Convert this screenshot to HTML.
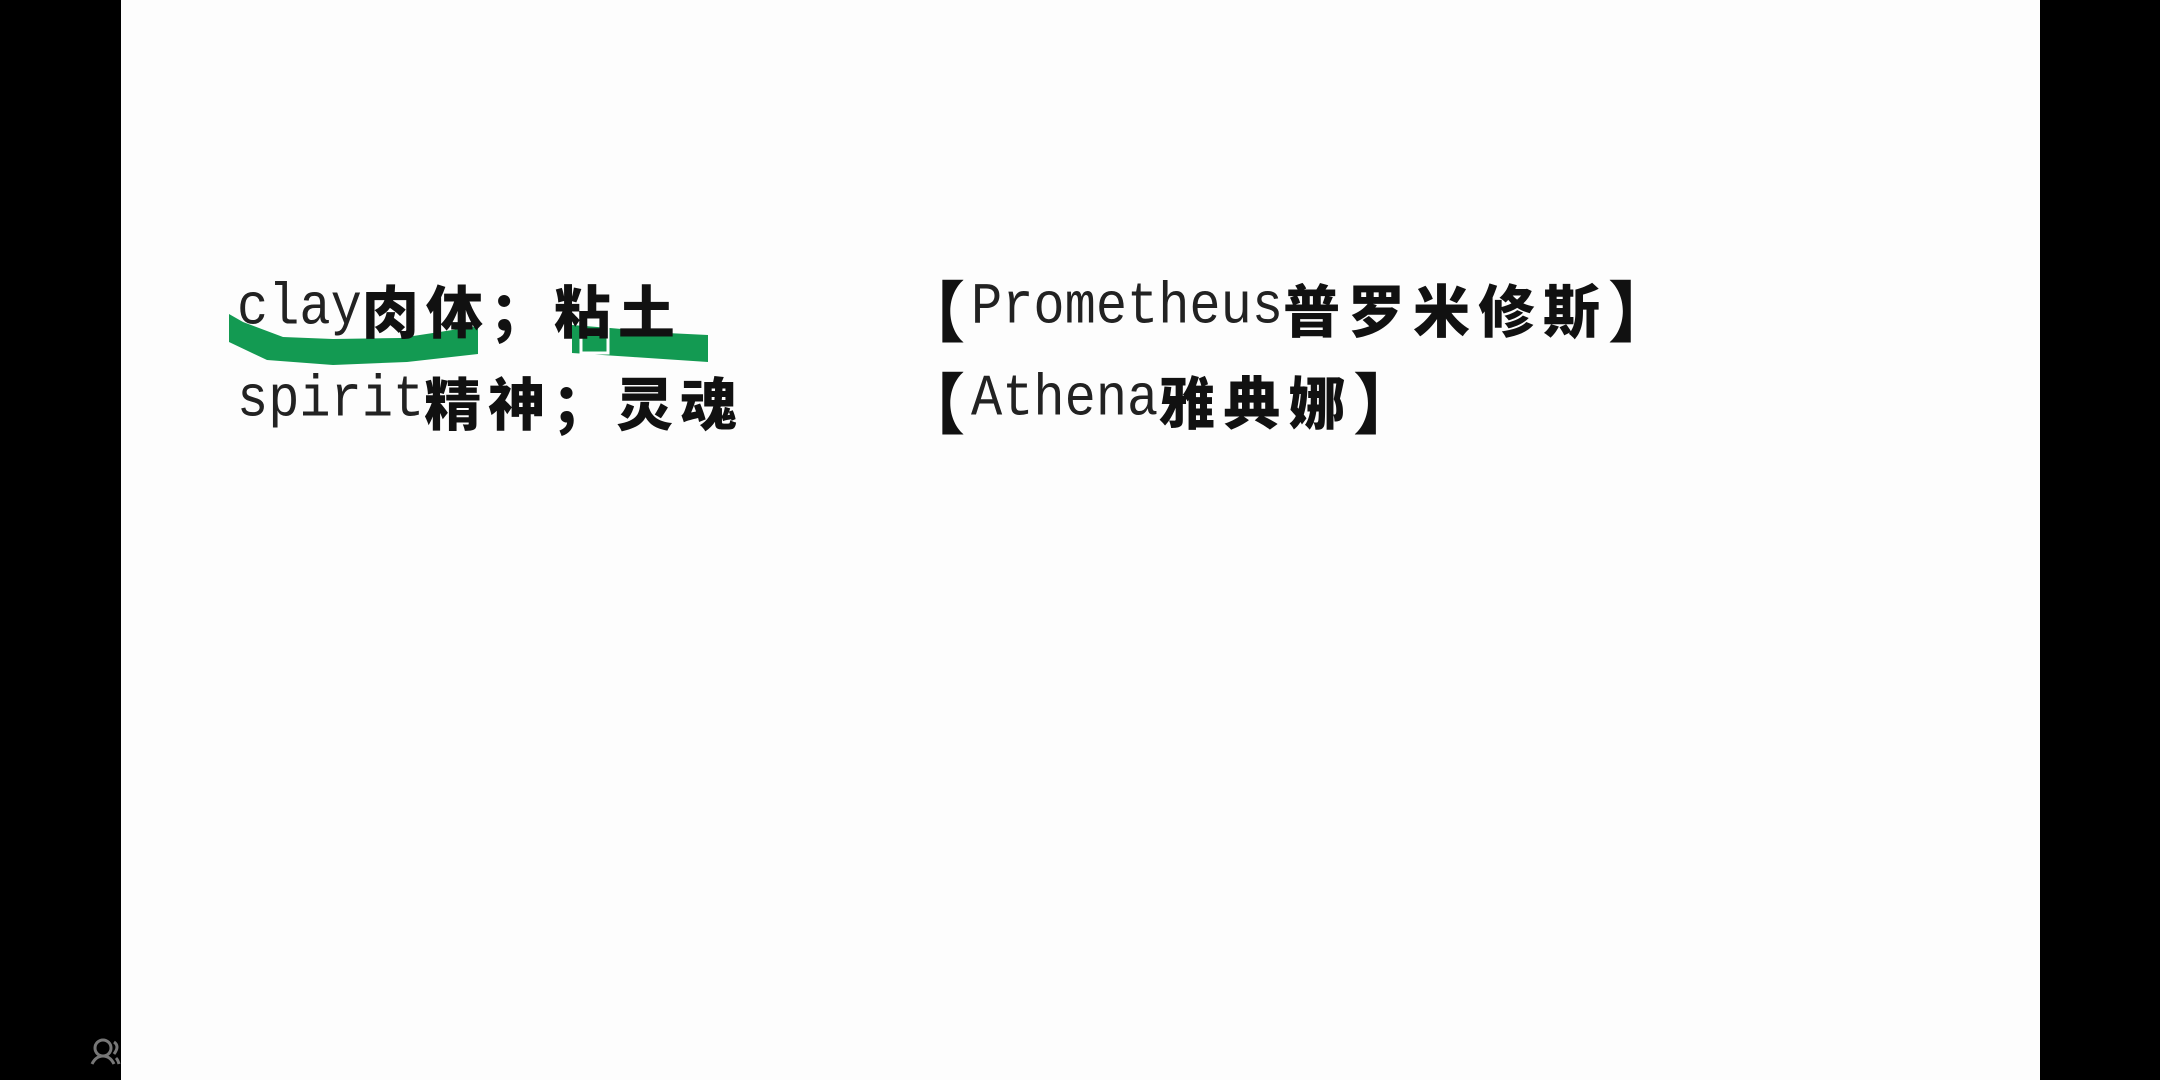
<!DOCTYPE html>
<html><head><meta charset="utf-8"><style>
html,body{margin:0;padding:0;}
body{width:2160px;height:1080px;position:relative;background:#000;overflow:hidden;}
#page{position:absolute;left:121px;top:0;width:1919px;height:1080px;background:#fdfdfd;}
.t{position:absolute;white-space:nowrap;height:70px;line-height:70px;color:#111;}
.l{font-family:"Liberation Mono",monospace;color:#222;font-size:52px;display:inline-block;transform:scaleY(1.12);vertical-align:top;}
.c{font-family:"Noto Sans CJK SC",sans-serif;font-weight:900;font-size:57px;letter-spacing:6px;vertical-align:top;}
.rc{letter-spacing:8px;}
.bl{position:absolute;top:0;right:100%;margin-right:6px;font-family:"Noto Sans CJK SC",sans-serif;font-weight:900;font-size:66px;line-height:70px;}
.brk{letter-spacing:0;margin-left:0px;font-size:66px;}
</style></head><body>
<div id="page"></div>
<svg style="position:absolute;left:0;top:0" width="2160" height="1080">
<path d="M229,314 L229,342 L267,360 L333,365 L407,362 L478,354 L478,326 L433,333 L400,338 L333,339 L283,337 L243,322 Z" fill="#139a52"/>
<path d="M572,325 L610,328 L667,333 L708,335 L708,362 L633,357 L572,353 Z" fill="#139a52"/>
<rect x="581" y="323" width="27" height="30" fill="none" stroke="#fff" stroke-width="3"/>
<g fill="none" stroke="#777" stroke-width="3"><circle cx="103" cy="1048" r="8"/><path d="M92,1064 q4,-8 11,-8 q7,0 11,8"/><path d="M114,1042 q6,4 0,12 M116,1058 q2,2 3,6"/></g>
</svg>
<div class="t" style="left:237px;top:274px"><span class="l">clay</span><span class="c" style="letter-spacing:7px">肉体；粘土</span></div>
<div class="t" style="left:237px;top:366px"><span class="l">spirit</span><span class="c" style="letter-spacing:7px">精神；灵魂</span></div>
<div class="t" style="left:971px;top:273px"><span class="bl">【</span><span class="l">Prometheus</span><span class="c rc">普罗米修斯</span><span class="c brk">】</span></div>
<div class="t" style="left:971px;top:365px"><span class="bl">【</span><span class="l">Athena</span><span class="c rc">雅典娜</span><span class="c brk">】</span></div>
</body></html>
